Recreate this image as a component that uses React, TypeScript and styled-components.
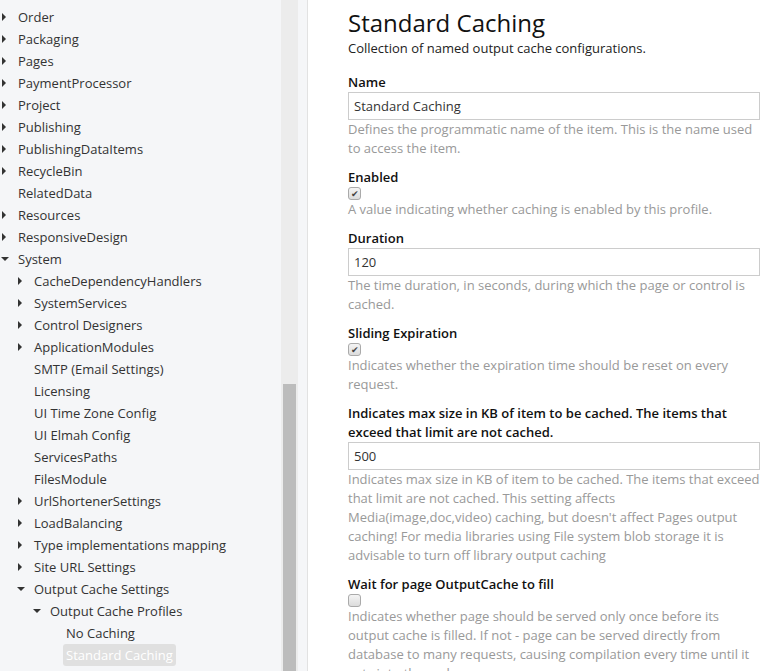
import styled, { createGlobalStyle } from "styled-components";

const GlobalStyle = createGlobalStyle`
  html, body {
    margin: 0;
    padding: 0;
    height: 100%;
    overflow: hidden;
  }
  body {
    font-family: "Open Sans", "Noto Sans", sans-serif;
    font-size: 13px;
    background: #fff;
  }
`;

interface TreeItem {
  label: string;
  level: number;
  caret?: "right" | "down";
  selected?: boolean;
}

const tree: TreeItem[] = [
  { label: "Order", level: 0, caret: "right" },
  { label: "Packaging", level: 0, caret: "right" },
  { label: "Pages", level: 0, caret: "right" },
  { label: "PaymentProcessor", level: 0, caret: "right" },
  { label: "Project", level: 0, caret: "right" },
  { label: "Publishing", level: 0, caret: "right" },
  { label: "PublishingDataItems", level: 0, caret: "right" },
  { label: "RecycleBin", level: 0, caret: "right" },
  { label: "RelatedData", level: 0 },
  { label: "Resources", level: 0, caret: "right" },
  { label: "ResponsiveDesign", level: 0, caret: "right" },
  { label: "System", level: 0, caret: "down" },
  { label: "CacheDependencyHandlers", level: 1, caret: "right" },
  { label: "SystemServices", level: 1, caret: "right" },
  { label: "Control Designers", level: 1, caret: "right" },
  { label: "ApplicationModules", level: 1, caret: "right" },
  { label: "SMTP (Email Settings)", level: 1 },
  { label: "Licensing", level: 1 },
  { label: "UI Time Zone Config", level: 1 },
  { label: "UI Elmah Config", level: 1 },
  { label: "ServicesPaths", level: 1 },
  { label: "FilesModule", level: 1 },
  { label: "UrlShortenerSettings", level: 1, caret: "right" },
  { label: "LoadBalancing", level: 1, caret: "right" },
  { label: "Type implementations mapping", level: 1, caret: "right" },
  { label: "Site URL Settings", level: 1, caret: "right" },
  { label: "Output Cache Settings", level: 1, caret: "down" },
  { label: "Output Cache Profiles", level: 2, caret: "down" },
  { label: "No Caching", level: 3 },
  { label: "Standard Caching", level: 3, selected: true },
];

export default function App() {
  return (
    <>
      <GlobalStyle />
      <Page>
        <Sidebar>
          <TreeList>
            {tree.map((item) => (
              <Row key={item.label} $level={item.level}>
                <CaretSlot>{item.caret && <Caret $dir={item.caret} />}</CaretSlot>
                <NodeLabel $selected={item.selected}>{item.label}</NodeLabel>
              </Row>
            ))}
          </TreeList>
          <ScrollTrack>
            <ScrollThumb style={{ height: 287 }} />
          </ScrollTrack>
        </Sidebar>

        <Main>
          <Title>Standard Caching</Title>
          <Subtitle>Collection of named output cache configurations.</Subtitle>

          <Field>
            <Label>Name</Label>
            <TextInput defaultValue="Standard Caching" />
            <Hint>Defines the programmatic name of the item. This is the name used to access the item.</Hint>
          </Field>

          <Field>
            <Label>Enabled</Label>
            <Check $checked>{"\u2714"}</Check>
            <Hint>A value indicating whether caching is enabled by this profile.</Hint>
          </Field>

          <Field>
            <Label>Duration</Label>
            <TextInput defaultValue="120" />
            <Hint>The time duration, in seconds, during which the page or control is cached.</Hint>
          </Field>

          <Field>
            <Label>Sliding Expiration</Label>
            <Check $checked>{"\u2714"}</Check>
            <Hint>Indicates whether the expiration time should be reset on every request.</Hint>
          </Field>

          <Field>
            <Label>Indicates max size in KB of item to be cached. The items that exceed that limit are not cached.</Label>
            <TextInput defaultValue="500" />
            <Hint>
              Indicates max size in KB of item to be cached. The items that exceed that limit are not cached. This setting affects
              <br />
              Media(image,doc,video) caching, but doesn't affect Pages output caching! For media libraries using File system blob storage it is advisable to turn off library output caching
            </Hint>
          </Field>

          <Field>
            <Label>Wait for page OutputCache to fill</Label>
            <Check />
            <Hint>
              Indicates whether page should be served only once before its output cache is filled. If not - page can be served directly from database to many requests, causing compilation every time until it gets into the cache.
            </Hint>
          </Field>
        </Main>
      </Page>
    </>
  );
}

const Page = styled.div`
  display: flex;
  height: 100vh;
  width: 100%;
  overflow: hidden;
`;

const Sidebar = styled.aside`
  flex: 0 0 308px;
  display: flex;
  background: #f5f6f8;
  border-right: 1px solid #e2e2e2;
  padding-right: 9px;
  box-sizing: border-box;
`;

const TreeList = styled.div`
  flex: 1;
  padding-top: 6px;
  overflow: hidden;
`;

const Row = styled.div<{ $level: number }>`
  height: 22px;
  display: flex;
  align-items: center;
  padding-left: ${(p) => p.$level * 16}px;
  color: #333;
  white-space: nowrap;
`;

const CaretSlot = styled.span`
  width: 18px;
  flex: 0 0 18px;
  display: flex;
  align-items: center;
  padding-left: 2px;
  box-sizing: border-box;
`;

const Caret = styled.span<{ $dir: "right" | "down" }>`
  width: 0;
  height: 0;
  ${(p) =>
    p.$dir === "right"
      ? `border-left: 4px solid #333;
         border-top: 4px solid transparent;
         border-bottom: 4px solid transparent;`
      : `margin-left: -1px;
         border-top: 4px solid #333;
         border-left: 4px solid transparent;
         border-right: 4px solid transparent;`}
`;

const NodeLabel = styled.span<{ $selected?: boolean }>`
  line-height: 22px;
  ${(p) =>
    p.$selected &&
    `background: #e0e0e0;
     color: #fff;
     border-radius: 3px;
     padding: 0 3px;
     margin-left: -3px;`}
`;

const ScrollTrack = styled.div`
  flex: 0 0 17px;
  background: #ececec;
  display: flex;
  flex-direction: column;
  justify-content: flex-end;
  padding: 0 2px;
  box-sizing: border-box;
`;

const ScrollThumb = styled.div`
  background: #bcbcbc;
`;

const Main = styled.main`
  flex: 1;
  padding: 8px 13px 0 40px;
  overflow: hidden;
  color: #222;
`;

const Title = styled.h1`
  margin: 0;
  font-size: 24px;
  font-weight: 400;
  line-height: 30px;
  color: #111;
`;

const Subtitle = styled.p`
  margin: 1px 0 15px;
  line-height: 19px;
  color: #222;
`;

const Field = styled.div`
  display: flex;
  flex-direction: column;
  align-items: flex-start;
  margin-bottom: 10px;
`;

const Label = styled.label`
  font-weight: 600;
  line-height: 19px;
  color: #111;
`;

const TextInput = styled.input`
  width: 100%;
  height: 28px;
  box-sizing: border-box;
  border: 1px solid #ccc;
  padding: 0 5px;
  margin: 0;
  font: inherit;
  color: #333;
  outline: none;
`;

const Check = styled.span<{ $checked?: boolean }>`
  width: 13px;
  height: 13px;
  box-sizing: border-box;
  border: 1px solid #aaa;
  border-radius: 3px;
  background: linear-gradient(#f4f4f4, #dcdcdc);
  display: flex;
  align-items: center;
  justify-content: center;
  font-size: 9px;
  line-height: 1;
  color: #444;
`;

const Hint = styled.p`
  margin: 0;
  line-height: 19px;
  color: #999;
`;
